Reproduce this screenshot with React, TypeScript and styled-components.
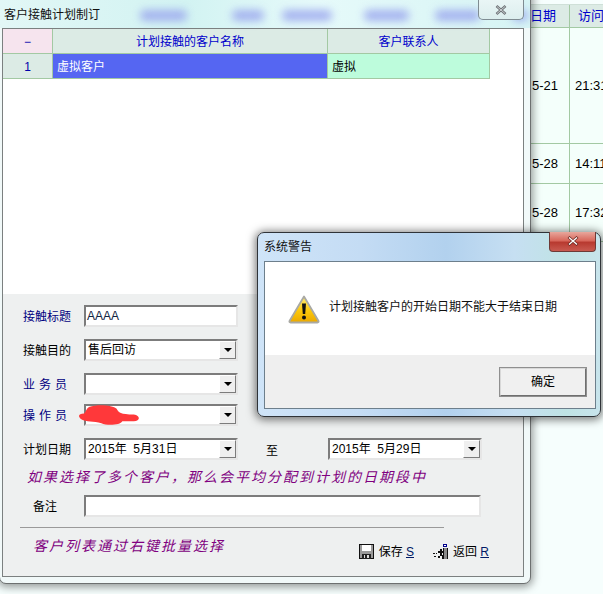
import React from 'react'
import styled, { createGlobalStyle } from 'styled-components'

const backRows = [
  { height: 116, date: '5-21', time: '21:31' },
  { height: 40, date: '5-28', time: '14:11' },
  { height: 58, date: '5-28', time: '17:32' },
]

const titleBlurs = [
  { gap: 36, width: 47 },
  { gap: 45, width: 32 },
  { gap: 18, width: 50 },
  { gap: 32, width: 45 },
  { gap: 26, width: 45 },
  { gap: 32, width: 16 },
]

export default function App() {
  return (
    <Desktop>
      <GlobalStyle />

      <BackTable>
        <BackHeader>
          <BackHeadCell $width={39}>日期</BackHeadCell>
          <BackHeadCell $width={35} $pad={8}>访问时</BackHeadCell>
        </BackHeader>
        {backRows.map(row => (
          <BackRow key={row.time} $height={row.height}>
            <BackCell $width={39}>{row.date}</BackCell>
            <BackCell $width={35} $pad={5}>{row.time}</BackCell>
          </BackRow>
        ))}
      </BackTable>

      <PlanWindow>
        <TitleBar>
          <TitleText>客户接触计划制订</TitleText>
          <TitleBlurs>
            {titleBlurs.map((blur, i) => (
              <TitleBlur key={i} $gap={blur.gap} $width={blur.width} />
            ))}
          </TitleBlurs>
          <GlassClose>
            <CloseGlyph viewBox="0 0 12 10">
              <path d="M1.5 1 L10.5 9 M10.5 1 L1.5 9" stroke="#6f7478" strokeWidth="2.6" />
              <path d="M2 1.5 L10 8.5 M10 1.5 L2 8.5" stroke="#dfe3e6" strokeWidth="0.8" />
            </CloseGlyph>
          </GlassClose>
        </TitleBar>

        <Client>
          <GridArea>
            <GridRow>
              <CornerCell>−</CornerCell>
              <NameHead>计划接触的客户名称</NameHead>
              <ContactHead>客户联系人</ContactHead>
            </GridRow>
            <GridRow>
              <IndexCell>1</IndexCell>
              <SelectedCell>虚拟客户</SelectedCell>
              <ContactCell>虚拟</ContactCell>
            </GridRow>
          </GridArea>

          <FormPanel>
            <FormRow>
              <FieldLabel $accent>接触标题</FieldLabel>
              <TextField>AAAA</TextField>
            </FormRow>
            <FormRow $top={12}>
              <FieldLabel>接触目的</FieldLabel>
              <ComboField value="售后回访" />
            </FormRow>
            <FormRow $top={12}>
              <SpacedLabel $accent>业务员</SpacedLabel>
              <ComboField />
            </FormRow>
            <FormRow $top={9}>
              <SpacedLabel $accent>操作员</SpacedLabel>
              <Redacted>
                <ComboField />
                <Scribble viewBox="0 0 64 22">
                  <path
                    d="M11 2 C20 -1 36 0 40 4 C42 8 44 10 58 10 C65 11 65 17 58 17 L46 17 C44 21 30 22 24 19 C16 17 8 18 3 15 C-1 12 0 9 6 9 C8 7 8 4 11 2 Z"
                    fill="#ff383a"
                  />
                </Scribble>
              </Redacted>
            </FormRow>
            <FormRow $top={12}>
              <FieldLabel>计划日期</FieldLabel>
              <ComboField value="2015年  5月31日" />
              <ToLabel>至</ToLabel>
              <ComboField value="2015年  5月29日" />
            </FormRow>
            <HintLine>如果选择了多个客户，那么会平均分配到计划的日期段中</HintLine>
            <FormRow>
              <RemarkLabel>备注</RemarkLabel>
              <RemarkField />
            </FormRow>
            <Separator />
            <FooterRow>
              <FooterHint>客户列表通过右键批量选择</FooterHint>
              <Actions>
                <ActionLink>
                  <SaveIcon />
                  <ActionText>
                    保存 <HotKey>S</HotKey>
                  </ActionText>
                </ActionLink>
                <ActionLink>
                  <BackIcon />
                  <ActionText>
                    返回 <HotKey>R</HotKey>
                  </ActionText>
                </ActionLink>
              </Actions>
            </FooterRow>
          </FormPanel>
        </Client>
      </PlanWindow>

      <AlertWindow>
        <AlertTitleBar>
          <AlertTitle>系统警告</AlertTitle>
          <RedClose>
            <CloseGlyph viewBox="0 0 12 10">
              <path d="M1.5 1 L10.5 9 M10.5 1 L1.5 9" stroke="#6d2a24" strokeWidth="2.8" />
              <path d="M2 1.5 L10 8.5 M10 1.5 L2 8.5" stroke="#ffffff" strokeWidth="1.3" />
            </CloseGlyph>
          </RedClose>
        </AlertTitleBar>
        <AlertClient>
          <AlertBody>
            <WarningIcon />
            <AlertMessage>计划接触客户的开始日期不能大于结束日期</AlertMessage>
          </AlertBody>
          <AlertFooter>
            <OkButton>确定</OkButton>
          </AlertFooter>
        </AlertClient>
      </AlertWindow>
    </Desktop>
  )
}

const ComboField = ({ value }: { value?: string }) => (
  <Combo>
    <ComboValue>{value}</ComboValue>
    <ComboButton>
      <ComboArrow />
    </ComboButton>
  </Combo>
)

const SaveIcon = () => (
  <IconSvg viewBox="0 0 15 15" shapeRendering="crispEdges">
    <path d="M0 0 H15 V15 H0 Z" fill="#111" />
    <path d="M1 1 H14 V14 H1 Z" fill="#9a9a9a" />
    <path d="M3 1 H12 V7 H3 Z" fill="#fff" />
    <path d="M3 10 H12 V15 H3 Z" fill="#222" />
    <path d="M5 11 H6 V14 H5 Z M8 11 H10 V14 H8 Z" fill="#ddd" />
  </IconSvg>
)

const BackIcon = () => (
  <IconSvg viewBox="0 0 15 15" shapeRendering="crispEdges">
    <path d="M10 0 H14 V3 H10 Z" fill="#00008b" />
    <path d="M11 1 H13 V2 H11 Z" fill="#fff" />
    <path d="M10 4 H14 V15 H10 Z" fill="#8a8a8a" />
    <path d="M10 4 H11 V15 H10 Z M14 4 H15 V15 H14 Z" fill="#111" />
    <path d="M7 5 H9 V7 H7 Z M5 7 H10 V9 H5 Z M7 9 H9 V12 H7 Z M5 12 H7 V14 H5 Z M9 11 H10 V15 H9 Z" fill="#111" />
    <path d="M0 9 H2 V10 H0 Z M3 9 H4 V10 H3 Z M1 12 H3 V13 H1 Z" fill="#111" />
  </IconSvg>
)

const WarningIcon = () => (
  <WarningSvg viewBox="0 0 32 29">
    <defs>
      <linearGradient id="warnFill" x1="0" y1="0" x2="0" y2="1">
        <stop offset="0" stopColor="#ffec7a" />
        <stop offset="0.55" stopColor="#fcc80a" />
        <stop offset="1" stopColor="#eaa800" />
      </linearGradient>
    </defs>
    <path
      d="M16 1.5 L30.5 26 Q31 27.5 29.5 27.5 L2.5 27.5 Q1 27.5 1.5 26 Z"
      fill="url(#warnFill)"
      stroke="#a9a9a4"
      strokeWidth="1.8"
      strokeLinejoin="round"
    />
    <path d="M14 8.5 H18 L17.2 19 H14.8 Z" fill="#111" />
    <circle cx="16" cy="22.6" r="2" fill="#111" />
  </WarningSvg>
)

const GlobalStyle = createGlobalStyle`
  html, body {
    margin: 0;
    padding: 0;
    background: #f6fefd;
  }
  * {
    box-sizing: border-box;
  }
`

const uiFont = `"Liberation Sans", "Noto Sans CJK SC", sans-serif`

const Desktop = styled.div`
  position: relative;
  width: 603px;
  height: 594px;
  overflow: hidden;
  font-family: ${uiFont};
  font-size: 12px;
  color: #000;
`

const BackTable = styled.div`
  position: absolute;
  left: 530px;
  top: 4px;
  width: 80px;
`

const BackHeader = styled.div`
  display: flex;
  height: 24px;
  background: #dcebe5;
  border-top: 1px solid #cfe0d8;
  border-bottom: 1px solid #a3c9a3;
`

const BackHeadCell = styled.div<{ $width: number; $pad?: number }>`
  width: ${p => p.$width}px;
  flex: none;
  padding-left: ${p => p.$pad ?? 0}px;
  color: #0000cc;
  font-size: 13px;
  line-height: 22px;
  white-space: nowrap;
  overflow: hidden;
  & + & {
    border-left: 1px solid #a3c9a3;
  }
`

const BackRow = styled.div<{ $height: number }>`
  display: flex;
  height: ${p => p.$height}px;
  background: #f4fffb;
  border-bottom: 1px solid #a3c9a3;
`

const BackCell = styled.div<{ $width: number; $pad?: number }>`
  width: ${p => p.$width}px;
  flex: none;
  display: flex;
  align-items: center;
  padding-left: ${p => p.$pad ?? 2}px;
  font-size: 13px;
  white-space: nowrap;
  & + & {
    border-left: 1px solid #a3c9a3;
  }
`

const PlanWindow = styled.div`
  position: absolute;
  left: -1px;
  top: -8px;
  width: 532px;
  height: 592px;
  padding: 0 6px 6px 2px;
  display: flex;
  flex-direction: column;
  background: #f1f9f9;
  border: 1px solid #6d7070;
  border-radius: 0 0 7px 7px;
  box-shadow: 0 1px 9px 2px rgba(0, 0, 0, 0.4);
`

const TitleBar = styled.div`
  position: relative;
  flex: none;
  height: 35px;
  margin: 0 -6px 0 -2px;
  padding: 8px 0 0 4px;
  display: flex;
  align-items: center;
  background: linear-gradient(90deg, #e2f7f6 0%, #d2f3f2 35%, #e6fafa 60%, #d6f4f4 100%);
`

const TitleText = styled.div`
  flex: none;
  width: 100px;
  line-height: 14px;
  color: #111;
  white-space: nowrap;
`

const TitleBlurs = styled.div`
  display: flex;
  align-items: center;
  padding-top: 2px;
`

const TitleBlur = styled.div<{ $gap: number; $width: number }>`
  flex: none;
  width: ${p => p.$width}px;
  height: 11px;
  margin-left: ${p => p.$gap}px;
  background: #9aa6ee;
  border-radius: 5px;
  filter: blur(4px);
  opacity: 0.85;
`

const GlassClose = styled.div`
  position: absolute;
  left: 478px;
  top: 0;
  width: 46px;
  height: 27px;
  padding-top: 12px;
  display: flex;
  justify-content: center;
  background: linear-gradient(180deg, #eef8f8, #dceeee);
  border: 1px solid #7f8c92;
  border-top: none;
  border-radius: 0 0 5px 5px;
`

const CloseGlyph = styled.svg`
  width: 12px;
  height: 10px;
  display: block;
`

const Client = styled.div`
  flex: 1;
  display: flex;
  flex-direction: column;
  background: #fff;
  border: 1px solid #7b8080;
  min-height: 0;
`

const GridArea = styled.div`
  flex: none;
  height: 265px;
  background: #fff;
`

const GridRow = styled.div`
  display: flex;
  width: 487px;
  height: 25px;
  border-bottom: 1px solid #a3c9a3;
`

const GridCell = styled.div<{ $width: number }>`
  flex: none;
  width: ${p => p.$width}px;
  border-right: 1px solid #a3c9a3;
  line-height: 26px;
  white-space: nowrap;
`

const CornerCell = styled(GridCell).attrs({ $width: 50 })`
  background: #f6e4ee;
  color: #0000aa;
  text-align: center;
`

const NameHead = styled(GridCell).attrs({ $width: 275 })`
  background: #dcebe5;
  color: #0000cc;
  text-align: center;
`

const ContactHead = styled(GridCell).attrs({ $width: 162 })`
  background: #dcebe5;
  color: #0000cc;
  text-align: center;
`

const IndexCell = styled(GridCell).attrs({ $width: 50 })`
  background: #dcebe5;
  color: #0000aa;
  text-align: center;
`

const SelectedCell = styled(GridCell).attrs({ $width: 275 })`
  background: #5566f2;
  color: #fff;
  padding-left: 4px;
`

const ContactCell = styled(GridCell).attrs({ $width: 162 })`
  background: #bdfcdc;
  padding-left: 4px;
`

const FormPanel = styled.div`
  flex: 1;
  padding: 11px 0 0 20px;
  background: #eef0f0;
`

const FormRow = styled.div<{ $top?: number }>`
  display: flex;
  align-items: center;
  margin-top: ${p => p.$top ?? 0}px;
`

const FieldLabel = styled.div<{ $accent?: boolean }>`
  flex: none;
  width: 61px;
  height: 22px;
  line-height: 25px;
  color: ${p => (p.$accent ? '#000080' : '#000')};
  white-space: nowrap;
`

const SpacedLabel = styled(FieldLabel)`
  letter-spacing: 4px;
`

const RemarkLabel = styled(FieldLabel)`
  padding-left: 10px;
`

const sunken = `
  background: #fff;
  border-style: solid;
  border-width: 2px;
  border-color: #7c7c7c #e6e6e6 #e6e6e6 #7c7c7c;
`

const TextField = styled.div`
  ${sunken}
  width: 154px;
  height: 22px;
  padding-left: 1px;
  line-height: 18px;
  color: #10233f;
`

const RemarkField = styled.div`
  ${sunken}
  width: 397px;
  height: 22px;
`

const Combo = styled.div`
  ${sunken}
  flex: none;
  width: 154px;
  height: 22px;
  display: flex;
  justify-content: space-between;
`

const ComboValue = styled.div`
  padding-left: 2px;
  line-height: 19px;
  white-space: pre;
`

const ComboButton = styled.div`
  flex: none;
  width: 17px;
  height: 18px;
  display: flex;
  align-items: center;
  justify-content: center;
  background: #efefef;
  border-style: solid;
  border-width: 1px;
  border-color: #fff #7c7c7c #7c7c7c #fff;
`

const ComboArrow = styled.div`
  width: 0;
  height: 0;
  border-left: 4px solid transparent;
  border-right: 4px solid transparent;
  border-top: 4px solid #000;
`

const ToLabel = styled.div`
  flex: none;
  width: 90px;
  padding-left: 28px;
`

const Redacted = styled.div`
  position: relative;
`

const Scribble = styled.svg`
  position: absolute;
  left: -7px;
  top: 1px;
  width: 64px;
  height: 21px;
`

const purpleHint = `
  color: #800080;
  font-style: italic;
  font-size: 14px;
  letter-spacing: 2px;
  white-space: nowrap;
`

const HintLine = styled.div`
  ${purpleHint}
  height: 35px;
  padding: 7px 0 0 4px;
  line-height: 20px;
`

const Separator = styled.div`
  width: 424px;
  height: 1px;
  margin: 10px 0 0 -3px;
  background: #9a9a9a;
`

const FooterRow = styled.div`
  display: flex;
  align-items: flex-start;
  justify-content: space-between;
  width: 466px;
  padding-top: 8px;
`

const FooterHint = styled.div`
  ${purpleHint}
  padding-left: 10px;
  line-height: 20px;
`

const Actions = styled.div`
  display: flex;
  gap: 19px;
  padding-top: 6px;
`

const ActionLink = styled.div`
  display: flex;
  align-items: center;
  gap: 5px;
  line-height: 15px;
  white-space: nowrap;
`

const ActionText = styled.span`
  padding-top: 3px;
`

const HotKey = styled.span`
  color: #001a66;
  text-decoration: underline;
`

const IconSvg = styled.svg`
  width: 15px;
  height: 15px;
  flex: none;
  display: block;
`

const AlertWindow = styled.div`
  position: absolute;
  left: 257px;
  top: 232px;
  width: 344px;
  height: 185px;
  padding: 0 4px 7px 6px;
  display: flex;
  flex-direction: column;
  background: linear-gradient(90deg, #cfe4f8 0%, #c4dcf4 30%, #b2d1ee 55%, #c6dff2 75%, #bfe3e4 90%, #c8e4ec 100%);
  border: 1px solid #2f3338;
  border-radius: 7px;
  box-shadow: 0 1px 8px 2px rgba(0, 0, 0, 0.5);
`

const AlertTitleBar = styled.div`
  position: relative;
  flex: none;
  height: 28px;
  padding-top: 6px;
`

const AlertTitle = styled.div`
  line-height: 16px;
  color: #111;
`

const RedClose = styled.div`
  position: absolute;
  left: 285px;
  top: -1px;
  width: 47px;
  height: 20px;
  padding-top: 4px;
  display: flex;
  justify-content: center;
  background: linear-gradient(180deg, #e8a79c 0%, #d8685c 45%, #b83a30 55%, #c85a50 100%);
  border: 1px solid #6e3a36;
  border-top: none;
  border-radius: 0 0 4px 4px;
`

const AlertClient = styled.div`
  flex: 1;
  display: flex;
  flex-direction: column;
  background: #fff;
  border: 1px solid #6d7f8c;
`

const AlertBody = styled.div`
  flex: none;
  height: 93px;
  padding: 33px 0 0 23px;
  display: flex;
  align-items: flex-start;
  gap: 9px;
  background: #fff;
`

const WarningSvg = styled.svg`
  width: 32px;
  height: 29px;
  flex: none;
  display: block;
`

const AlertMessage = styled.div`
  line-height: 24px;
  white-space: nowrap;
  color: #111;
`

const AlertFooter = styled.div`
  flex: 1;
  padding: 12px 8px 0 0;
  display: flex;
  justify-content: flex-end;
  align-items: flex-start;
  background: #efefef;
`

const OkButton = styled.div`
  width: 88px;
  height: 30px;
  line-height: 26px;
  text-align: center;
  background: #f0f0f0;
  border-style: solid;
  border-width: 2px;
  border-color: #d8d8d8 #6f6f6f #6f6f6f #d8d8d8;
  outline: 1px solid #8f8f8f;
  outline-offset: -1px;
`
